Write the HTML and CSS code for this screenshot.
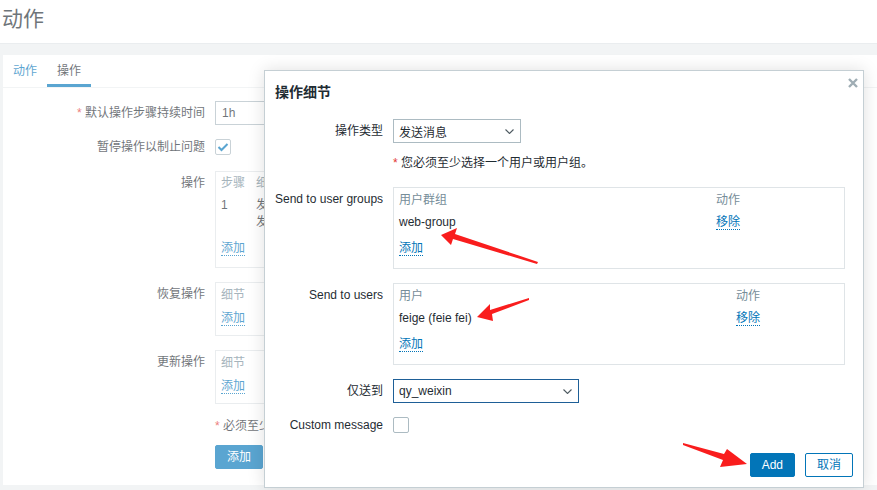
FILE: index.html
```html
<!DOCTYPE html>
<html lang="zh">
<head>
<meta charset="utf-8">
<title>动作</title>
<link rel="stylesheet" href="styles.css">
</head>
<body>
<div class="page">
  <header class="page-header"><h1 class="page-title">动作</h1></header>
  <main class="content">
    <section class="panel">
      <nav class="tabs">
        <a class="tab">动作</a>
        <a class="tab active">操作</a>
      </nav>
      <div class="form">
        <div class="frow">
          <div class="flabel"><span class="req">*</span> 默认操作步骤持续时间</div>
          <div class="ffield"><div class="text-input">1h</div></div>
        </div>
        <div class="frow gap10">
          <div class="flabel">暂停操作以制止问题</div>
          <div class="ffield cbwrap">
            <span class="checkbox"><svg width="12" height="10" viewBox="0 0 12 10"><path d="M1.5 5 L4.5 8 L10.5 2" fill="none" stroke="#0275b8" stroke-width="2"/></svg></span>
          </div>
        </div>
        <div class="frow gap12">
          <div class="flabel">操作</div>
          <div class="ffield">
            <div class="lbox lbox-ops">
              <table class="tbl">
                <tr><th class="col-step">步骤</th><th>细节</th></tr>
                <tr class="multi"><td class="col-step">1</td><td><div>发送</div><div>发送</div></td></tr>
              </table>
              <div class="addrow add-ops"><span class="link">添加</span></div>
            </div>
          </div>
        </div>
        <div class="frow gap14">
          <div class="flabel">恢复操作</div>
          <div class="ffield">
            <div class="lbox lbox-small">
              <table class="tbl"><tr><th>细节</th></tr></table>
              <div class="addrow add-small"><span class="link">添加</span></div>
            </div>
          </div>
        </div>
        <div class="frow gap14">
          <div class="flabel">更新操作</div>
          <div class="ffield">
            <div class="lbox lbox-small">
              <table class="tbl"><tr><th>细节</th></tr></table>
              <div class="addrow add-small"><span class="link">添加</span></div>
            </div>
          </div>
        </div>
        <div class="frow gap15">
          <div class="flabel"></div>
          <div class="ffield note"><span class="req">*</span> 必须至少</div>
        </div>
        <div class="frow gap12">
          <div class="flabel"></div>
          <div class="ffield"><button class="btn btn-primary">添加</button></div>
        </div>
      </div>
    </section>
  </main>
</div>

<div class="dim"></div>

<div class="modal">
  <div class="m-head">
    <h4 class="m-title">操作细节</h4>
    <span class="m-close"><svg width="10" height="10" viewBox="0 0 10 10"><path d="M1 1 L9 9 M9 1 L1 9" stroke="#9fadb4" stroke-width="2.4"/></svg></span>
  </div>
  <div class="m-body">
    <div class="mrow">
      <div class="mlabel">操作类型</div>
      <div class="mfield">
        <div class="select w128"><span>发送消息</span><svg width="9" height="5" viewBox="0 0 9 5"><path d="M0.5 0.5 L4.5 4.5 L8.5 0.5" fill="none" stroke="#4f5b62" stroke-width="1.1"/></svg></div>
      </div>
    </div>
    <div class="mrow mb14">
      <div class="mlabel"></div>
      <div class="mfield mnote"><span class="req">*</span> 您必须至少选择一个用户或用户组。</div>
    </div>
    <div class="mrow mb14">
      <div class="mlabel">Send to user groups</div>
      <div class="mfield">
        <div class="mbox">
          <table class="tbl">
            <tr><th class="col-g">用户群组</th><th>动作</th></tr>
            <tr><td class="col-g">web-group</td><td><span class="link">移除</span></td></tr>
          </table>
          <div class="addrow add-m"><span class="link">添加</span></div>
        </div>
      </div>
    </div>
    <div class="mrow mb14">
      <div class="mlabel">Send to users</div>
      <div class="mfield">
        <div class="mbox">
          <table class="tbl">
            <tr><th class="col-u">用户</th><th>动作</th></tr>
            <tr><td class="col-u">feige (feie fei)</td><td><span class="link">移除</span></td></tr>
          </table>
          <div class="addrow add-m"><span class="link">添加</span></div>
        </div>
      </div>
    </div>
    <div class="mrow">
      <div class="mlabel">仅送到</div>
      <div class="mfield">
        <div class="select w186 focused"><span>qy_weixin</span><svg width="9" height="5" viewBox="0 0 9 5"><path d="M0.5 0.5 L4.5 4.5 L8.5 0.5" fill="none" stroke="#4f5b62" stroke-width="1.1"/></svg></div>
      </div>
    </div>
    <div class="mrow mb0">
      <div class="mlabel">Custom message</div>
      <div class="mfield cbwrap"><span class="checkbox"></span></div>
    </div>
  </div>
  <div class="m-foot">
    <button class="btn btn-primary">Add</button>
    <button class="btn btn-alt">取消</button>
  </div>
</div>

<svg class="arrows" width="877" height="490" viewBox="0 0 877 490">
  <polygon points="441,235 457,228 455,234 538,262 537,264 453,239 451,245" fill="#f91d1d"/>
  <polygon points="477,317 490,304 490,310 529,298 529,300 492,314 493,321" fill="#f91d1d"/>
  <polygon points="683,443 724,454 727,449 747,464 720,467 723,460 683,445" fill="#f91d1d"/>
</svg>
</body>
</html>
```

FILE: styles.css
```css
* { box-sizing: border-box; }
html, body { margin: 0; padding: 0; }
body {
  width: 877px;
  height: 490px;
  overflow: hidden;
  position: relative;
  background: #ebeef0;
  font-family: "Liberation Sans", "Noto Sans CJK SC", sans-serif;
  font-size: 12px;
  color: #1f2c33;
}

.page-header {
  height: 44px;
  background: #fff;
  border-bottom: 1px solid #dfe4e7;
}
.page-title {
  margin: 0;
  padding: 7px 0 0 2px;
  font-size: 21px;
  line-height: 24px;
  font-weight: normal;
  color: #1f2c33;
}

.content { padding: 11px 0 0 3px; }
.panel { background: #fff; height: 430px; }

.tabs {
  display: flex;
  height: 33px;
  border-bottom: 1px solid #ebeef0;
}
.tab {
  height: 32px;
  padding: 9px 10px 0;
  line-height: 14px;
  color: #0275b8;
}
.tab.active {
  color: #1f2c33;
  border-bottom: 3px solid #0275b8;
}

.form { padding-top: 13px; }
.frow { display: flex; align-items: flex-start; }
.gap10 { margin-top: 10px; }
.gap12 { margin-top: 12px; }
.gap14 { margin-top: 14px; }
.gap15 { margin-top: 15px; }
.flabel {
  width: 202px;
  flex: none;
  text-align: right;
  padding-top: 5px;
  line-height: 14px;
}
.ffield { margin-left: 10px; flex: none; }
.req { color: #e33734; }
.note { line-height: 14px; white-space: nowrap; }

.text-input {
  width: 49px;
  height: 24px;
  border: 1px solid #acbbc2;
  border-right: 0;
  padding: 0 6px;
  line-height: 22px;
}
.cbwrap { height: 24px; display: flex; align-items: center; }
.checkbox {
  width: 16px;
  height: 16px;
  border: 1px solid #acbbc2;
  border-radius: 2px;
  background: #fff;
  display: flex;
  align-items: center;
  justify-content: center;
}

.lbox { width: 49px; border: 1px solid #dfe4e7; border-right: 0; padding: 0 0 0 5px; overflow: hidden; }
.lbox-ops { padding-bottom: 12px; }
.lbox-small { padding-top: 1px; padding-bottom: 10px; }

.tbl { border-collapse: collapse; }
.tbl th, .tbl td {
  height: 22px;
  padding: 0;
  text-align: left;
  font-weight: normal;
  vertical-align: middle;
  line-height: 14px;
  white-space: nowrap;
}
.tbl th { color: #768d99; }
.tbl tr.multi td { padding: 3px 0; line-height: 17px; vertical-align: top; }
.col-step { width: 35px; min-width: 35px; }
.col-g { width: 317px; }
.col-u { width: 337px; }

.addrow { line-height: 14px; }
.add-ops { padding-top: 7px; }
.add-small { padding-top: 5px; }
.add-m { padding-top: 8px; }
.link { color: #0275b8; border-bottom: 1px dotted #0275b8; }

.btn {
  height: 24px;
  padding: 0 11px;
  border-radius: 2px;
  border: 1px solid #0275b8;
  font-family: "Liberation Sans", "Noto Sans CJK SC", sans-serif;
  font-size: 12px;
  line-height: 22px;
}
.btn-primary { background: #0275b8; color: #fff; }
.btn-alt { background: #fff; color: #0275b8; }

.dim {
  position: absolute;
  inset: 0;
  background: rgba(255, 255, 255, 0.35);
}

.modal {
  position: absolute;
  left: 264px;
  top: 70px;
  width: 600px;
  background: #fff;
  border: 1px solid #c5cfd4;
  box-shadow: 0 0 16px rgba(0, 0, 0, 0.13);
}
.m-head { position: relative; padding: 12px 10px 7px; }
.m-title { margin: 0; font-size: 14px; line-height: 18px; font-weight: bold; }
.m-close { position: absolute; right: 5px; top: 7px; width: 10px; height: 10px; display: flex; }
.m-body { padding: 11px 0 0 10px; }
.mrow { display: flex; align-items: flex-start; margin-bottom: 10px; }
.mrow.mb14 { margin-bottom: 14px; }
.mrow.mb0 { margin-bottom: 0; }
.mlabel {
  width: 108px;
  flex: none;
  text-align: right;
  padding-top: 5px;
  line-height: 14px;
  white-space: nowrap;
}
.mfield { margin-left: 10px; }
.mnote { line-height: 20px; }

.select {
  height: 24px;
  border: 1px solid #acbbc2;
  display: flex;
  align-items: center;
  justify-content: space-between;
  padding: 0 6px 0 5px;
}
.select.w128 { width: 128px; }
.select.w186 { width: 186px; }
.select.focused { border-color: #1e5f97; }

.mbox {
  width: 452px;
  border: 1px solid #dfe4e7;
  padding: 1px 5px 13px;
}

.m-foot {
  display: flex;
  justify-content: flex-end;
  gap: 10px;
  padding: 16px 10px 10px;
}

.arrows { position: absolute; left: 0; top: 0; pointer-events: none; }
```
